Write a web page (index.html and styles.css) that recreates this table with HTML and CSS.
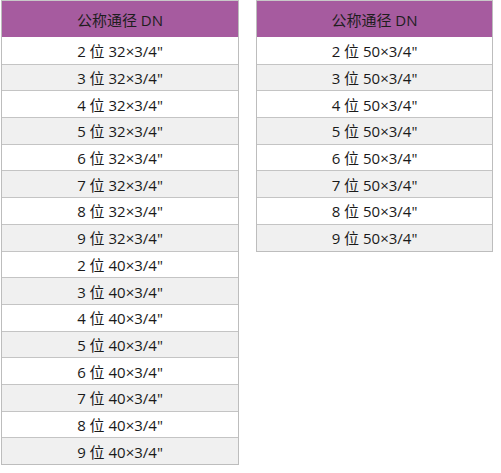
FILE: index.html
```html
<!DOCTYPE html>
<html lang="zh">
<head>
<meta charset="utf-8">
<link rel="stylesheet" href="styles.css">
</head>
<body>
<div class="wrap">
  <div class="tbl tbl-left">
    <div class="head">公称通径 DN</div>
    <div class="row">2 位 32×3/4"</div>
    <div class="row alt">3 位 32×3/4"</div>
    <div class="row">4 位 32×3/4"</div>
    <div class="row alt">5 位 32×3/4"</div>
    <div class="row">6 位 32×3/4"</div>
    <div class="row alt">7 位 32×3/4"</div>
    <div class="row">8 位 32×3/4"</div>
    <div class="row alt">9 位 32×3/4"</div>
    <div class="row">2 位 40×3/4"</div>
    <div class="row alt">3 位 40×3/4"</div>
    <div class="row">4 位 40×3/4"</div>
    <div class="row alt">5 位 40×3/4"</div>
    <div class="row">6 位 40×3/4"</div>
    <div class="row alt">7 位 40×3/4"</div>
    <div class="row">8 位 40×3/4"</div>
    <div class="row alt">9 位 40×3/4"</div>
  </div>
  <div class="tbl tbl-right">
    <div class="head">公称通径 DN</div>
    <div class="row">2 位 50×3/4"</div>
    <div class="row alt">3 位 50×3/4"</div>
    <div class="row">4 位 50×3/4"</div>
    <div class="row alt">5 位 50×3/4"</div>
    <div class="row">6 位 50×3/4"</div>
    <div class="row alt">7 位 50×3/4"</div>
    <div class="row">8 位 50×3/4"</div>
    <div class="row alt">9 位 50×3/4"</div>
  </div>
</div>
</body>
</html>
```

FILE: styles.css
```css
html, body {
  margin: 0;
  padding: 0;
  background: #ffffff;
}
.wrap {
  display: flex;
  align-items: flex-start;
  gap: 17px;
  padding-left: 1px;
  font-family: "Open Sans", "Noto Sans CJK SC", sans-serif;
  font-size: 15px;
  color: #1a1a1a;
}
.tbl {
  border: 1px solid #bdbdbd;
  border-top-color: #c8c8c8;
  box-sizing: border-box;
}
.tbl-left { width: 238px; }
.tbl-right { width: 237px; }
.head {
  background: #a65b9f;
  height: 36px;
  display: flex;
  align-items: center;
  justify-content: center;
  color: #1e1e1e;
}
.row {
  height: 26.69px;
  box-sizing: border-box;
  border-top: 1px solid #c4c4c4;
  display: flex;
  align-items: center;
  justify-content: center;
  background: #ffffff;
}
.tbl .head + .row { border-top: none; }
.row.alt { background: #f0f0f0; }
```
